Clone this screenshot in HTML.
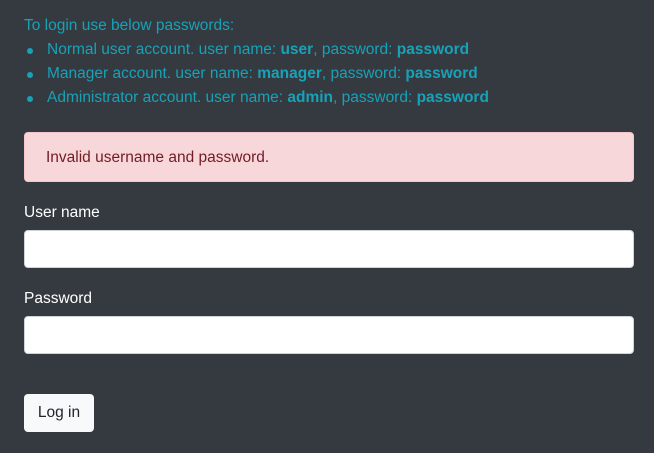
<!DOCTYPE html>
<html><head><style>
body{margin:0;background:#343a40;font-family:"Liberation Sans",sans-serif;font-size:15.5px;width:654px;height:453px;overflow:hidden;}
.info{color:#17a2b8;position:absolute;left:24px;top:14px;line-height:24px;}
ul{margin:0;padding-left:23px;list-style:none;}
li{position:relative;}
li:before{content:"";position:absolute;left:-20px;top:10px;width:6px;height:6px;border-radius:50%;background:#17a2b8;}
b{font-weight:bold}
.alert{position:absolute;left:24px;top:132px;width:610px;height:50px;box-sizing:border-box;background:#f8d7da;border:1px solid #f5c6cb;border-radius:4px;color:#721c24;padding:0 21px;line-height:50px;}
label{position:absolute;left:24px;color:#fff;}
.inp{position:absolute;left:24px;width:610px;height:38px;box-sizing:border-box;background:#fff;border:1px solid #ced4da;border-radius:4px;}
.btn{position:absolute;left:24px;top:394px;width:70px;height:38px;box-sizing:border-box;background:#f8f9fa;border-radius:4px;color:#212529;text-align:center;line-height:38px;}
</style></head><body>
<div class="info">To login use below passwords:
<ul>
<li>Normal user account. user name: <b>user</b>, password: <b>password</b></li>
<li>Manager account. user name: <b>manager</b>, password: <b>password</b></li>
<li>Administrator account. user name: <b>admin</b>, password: <b>password</b></li>
</ul></div>
<div class="alert">Invalid username and password.</div>
<label style="top:204px">User name</label>
<div class="inp" style="top:230px"></div>
<label style="top:290px">Password</label>
<div class="inp" style="top:316px"></div>
<div class="btn">Log in</div>
</body></html>
